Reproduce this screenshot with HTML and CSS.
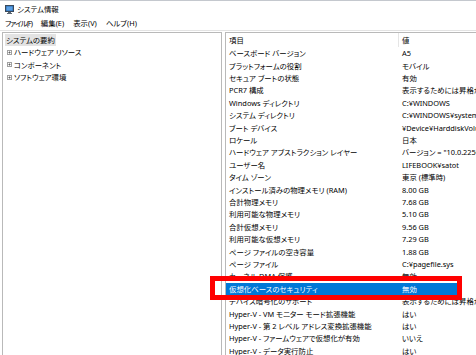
FILE: index.html
```html
<!DOCTYPE html>
<html lang="ja">
<head>
<meta charset="utf-8">
<link rel="stylesheet" href="styles.css">
</head>
<body>
<div class="window">
  <div class="titlebar">
    <svg class="app-icon" width="9" height="9" viewBox="0 0 9 9">
      <rect x="0.5" y="0.5" width="8" height="6" fill="#2b6cb0" stroke="#3a4a5c"/>
      <rect x="1.5" y="1.5" width="6" height="4" fill="#5aa0e6"/>
      <rect x="3" y="7" width="3" height="1" fill="#5a6570"/>
      <rect x="2" y="8" width="5" height="1" fill="#5a6570"/>
    </svg>
    <span class="title">システム情報</span>
  </div>
  <div class="menubar">
    <span class="menu menu-file">ファイル(F)</span>
    <span class="menu">編集(E)</span>
    <span class="menu">表示(V)</span>
    <span class="menu">ヘルプ(H)</span>
  </div>
  <div class="content">
    <div class="tree">
      <div class="tree-row"><span class="tree-sel">システムの要約</span></div>
      <div class="tree-row child"><svg class="exp" width="5" height="5" viewBox="0 0 5 5"><rect x="0.5" y="0.5" width="4" height="4" fill="#fff" stroke="#a0a0a0"/><path d="M1.5 2.5h2M2.5 1.5v2" stroke="#606060"/></svg>ハードウェア リソース</div>
      <div class="tree-row child"><svg class="exp" width="5" height="5" viewBox="0 0 5 5"><rect x="0.5" y="0.5" width="4" height="4" fill="#fff" stroke="#a0a0a0"/><path d="M1.5 2.5h2M2.5 1.5v2" stroke="#606060"/></svg>コンポーネント</div>
      <div class="tree-row child"><svg class="exp" width="5" height="5" viewBox="0 0 5 5"><rect x="0.5" y="0.5" width="4" height="4" fill="#fff" stroke="#a0a0a0"/><path d="M1.5 2.5h2M2.5 1.5v2" stroke="#606060"/></svg>ソフトウェア環境</div>
    </div>
    <div class="list">
      <div class="list-header"><div class="c1">項目</div><div class="c2">値</div></div>
      <div class="row"><div class="c1">ベースボード バージョン</div><div class="c2">A5</div></div>
      <div class="row"><div class="c1">プラットフォームの役割</div><div class="c2">モバイル</div></div>
      <div class="row"><div class="c1">セキュア ブートの状態</div><div class="c2">有効</div></div>
      <div class="row"><div class="c1">PCR7 構成</div><div class="c2">表示するためには昇格が必要です</div></div>
      <div class="row"><div class="c1">Windows ディレクトリ</div><div class="c2">C:¥WINDOWS</div></div>
      <div class="row"><div class="c1">システム ディレクトリ</div><div class="c2">C:¥WINDOWS¥system32</div></div>
      <div class="row"><div class="c1">ブート デバイス</div><div class="c2">¥Device¥HarddiskVolume1</div></div>
      <div class="row"><div class="c1">ロケール</div><div class="c2">日本</div></div>
      <div class="row"><div class="c1">ハードウェア アブストラクション レイヤー</div><div class="c2">バージョン = "10.0.22500.1000"</div></div>
      <div class="row"><div class="c1">ユーザー名</div><div class="c2">LIFEBOOK¥satot</div></div>
      <div class="row"><div class="c1">タイム ゾーン</div><div class="c2">東京 (標準時)</div></div>
      <div class="row"><div class="c1">インストール済みの物理メモリ (RAM)</div><div class="c2">8.00 GB</div></div>
      <div class="row"><div class="c1">合計物理メモリ</div><div class="c2">7.68 GB</div></div>
      <div class="row"><div class="c1">利用可能な物理メモリ</div><div class="c2">5.10 GB</div></div>
      <div class="row"><div class="c1">合計仮想メモリ</div><div class="c2">9.56 GB</div></div>
      <div class="row"><div class="c1">利用可能な仮想メモリ</div><div class="c2">7.29 GB</div></div>
      <div class="row"><div class="c1">ページ ファイルの空き容量</div><div class="c2">1.88 GB</div></div>
      <div class="row"><div class="c1">ページ ファイル</div><div class="c2">C:¥pagefile.sys</div></div>
      <div class="row"><div class="c1">カーネル DMA 保護</div><div class="c2">無効</div></div>
      <div class="row selected"><div class="c1">仮想化ベースのセキュリティ</div><div class="c2">無効</div></div>
      <div class="row"><div class="c1">デバイス暗号化のサポート</div><div class="c2">表示するためには昇格が必要です</div></div>
      <div class="row"><div class="c1">Hyper-V - VM モニター モード拡張機能</div><div class="c2">はい</div></div>
      <div class="row"><div class="c1">Hyper-V - 第 2 レベル アドレス変換拡張機能</div><div class="c2">はい</div></div>
      <div class="row"><div class="c1">Hyper-V - ファームウェアで仮想化が有効</div><div class="c2">いいえ</div></div>
      <div class="row"><div class="c1">Hyper-V - データ実行防止</div><div class="c2">はい</div></div>
    </div>
  </div>
  <div class="callout"></div>
</div>
</body>
</html>
```

FILE: styles.css
```css
html, body {
  margin: 0;
  padding: 0;
  background: #ffffff;
}
body {
  width: 476px;
  height: 355px;
  overflow: hidden;
  font-family: "Noto Sans", "Noto Sans CJK JP", sans-serif;
  font-size: 7.4px;
  font-feature-settings: "palt";
  color: #000;
}
.window {
  position: relative;
  width: 476px;
  height: 355px;
  border-top: 1px solid #c4c8ce;
  box-sizing: border-box;
}
.titlebar {
  height: 16px;
  display: flex;
  align-items: center;
  padding-left: 5px;
  gap: 3px;
}
.app-icon { display: block; }
.title { line-height: 16px; }
.menubar {
  height: 13px;
  display: flex;
  align-items: center;
  padding-left: 5px;
  gap: 9px;
  line-height: 13px;
}
.menu-file { letter-spacing: -1px; }
.content {
  display: flex;
  gap: 3px;
  padding-left: 2px;
  padding-top: 1px;
  border-top: 1px solid #e3e3e3;
}
.tree {
  width: 220px;
  height: 340px;
  border: 1px solid #b9b9b9;
  box-sizing: border-box;
  padding-top: 1px;
  padding-left: 2px;
  flex: none;
}
.tree-row {
  height: 12.4px;
  line-height: 12.4px;
  white-space: nowrap;
  display: flex;
  align-items: center;
}
.tree-sel {
  background: #e3e3e3;
  padding: 0 1px;
}
.tree-row.child { padding-left: 2px; }
.exp { margin-right: 2px; flex: none; }
.list {
  width: 320px;
  height: 340px;
  border: 1px solid #b9b9b9;
  box-sizing: border-box;
  flex: none;
}
.list-header {
  display: flex;
  height: 14.3px;
  line-height: 14.3px;
}
.list-header .c1 { border-right: 1px solid #e5e5e5; }
.row {
  display: flex;
  height: 12.4px;
  line-height: 12.4px;
  white-space: nowrap;
}
.c1 {
  width: 173px;
  padding-left: 3px;
  box-sizing: border-box;
  overflow: hidden;
  flex: none;
}
.c2 {
  padding-left: 3px;
  white-space: nowrap;
}
.row.selected {
  background: linear-gradient(to right, #0078d7 0, #0078d7 234px, transparent 234px);
  color: #fff;
}
.callout {
  position: absolute;
  left: 210px;
  top: 275px;
  width: 252px;
  height: 24px;
  border: 5px solid #ff0000;
  box-sizing: border-box;
}
```
